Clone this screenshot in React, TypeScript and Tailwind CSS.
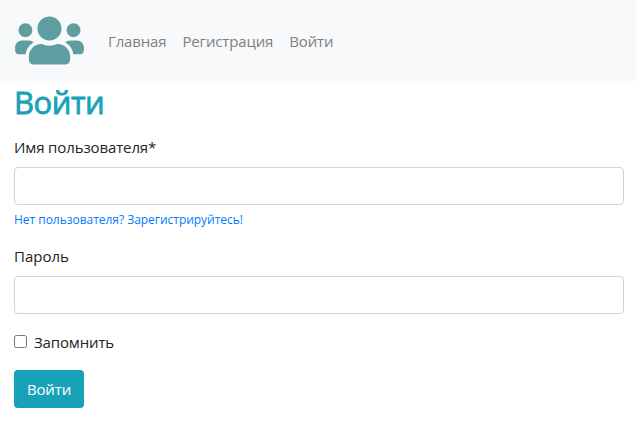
import { FaUsers } from "react-icons/fa";

const links = ["Главная", "Регистрация", "Войти"];

export default function App() {
  return (
    <div className="min-h-[423px] bg-white font-['Open_Sans','Noto_Sans',sans-serif] text-base leading-6 text-[#212529]">
      <nav className="flex h-[81px] items-center bg-[#f8f9fa] pl-[15px]">
        <a href="#" className="mr-4 pb-px text-[#5f9ea0]">
          <FaUsers className="h-[55px] w-[69px]" />
        </a>
        <ul className="flex text-[15px] tracking-[-0.15px] text-[#7f8080]">
          {links.map((label) => (
            <li key={label}>
              <a href="#" className="block py-2 pr-[8px] pl-2">{label}</a>
            </li>
          ))}
        </ul>
      </nav>
      <main className="pr-3 pl-[14px]">
        <h1 className="mb-2 h-[46px] text-[31px] leading-[42px] font-normal tracking-[-0.5px] text-[#17a2b8] [-webkit-text-stroke:0.8px_#17a2b8]">Войти</h1>
        <form>
          <label htmlFor="user" className="mb-2 block text-[15px] tracking-[-0.12px]">Имя пользователя*</label>
          <input id="user" className="block h-[38px] w-full rounded border border-[#ced4da] px-3" />
          <a href="#" className="mt-1 block h-[21px] text-xs leading-[21px] tracking-[-0.03px] text-[#007bff]">Нет пользователя? Зарегистрируйтесь!</a>
          <label htmlFor="password" className="mt-[14px] mb-2 block text-[15px]">Пароль</label>
          <input id="password" type="password" className="block h-[38px] w-full rounded border border-[#ced4da] px-3" />
          <label className="mt-4 flex h-6 items-center gap-[7px] text-[15px] tracking-[-0.15px]">
            <input type="checkbox" className="mb-0.5 h-[13px] w-[13px]" />
            Запомнить
          </label>
          <button type="button" className="mt-4 h-[38px] w-[70px] rounded bg-[#17a2b8] text-[15px] tracking-[-0.15px] text-white">Войти</button>
        </form>
      </main>
    </div>
  );
}
